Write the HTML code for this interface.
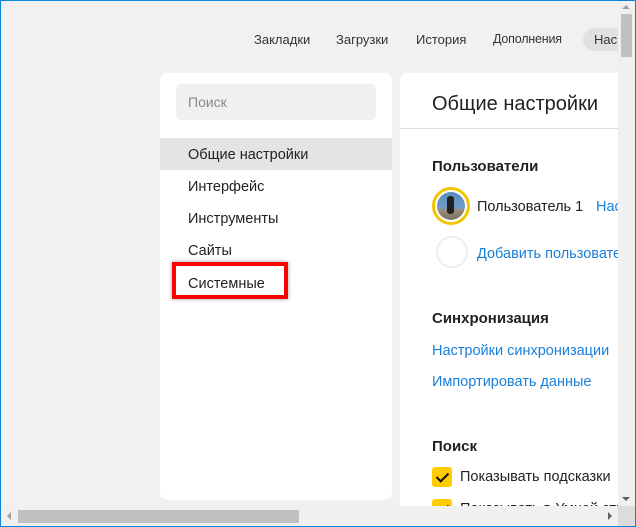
<!DOCTYPE html>
<html><head><meta charset="utf-8"><style>
*{margin:0;padding:0;box-sizing:border-box}
html,body{width:636px;height:527px;overflow:hidden}
body{background:#f2f1ef;font-family:"Liberation Sans","DejaVu Sans",sans-serif;font-size:14px;color:#222;position:relative}
.frame{position:absolute;left:0;top:0;width:636px;height:527px;border:1px solid #0a84d6;pointer-events:none;z-index:10}
.nav{position:absolute;top:32px;font-size:13px;color:#333;white-space:nowrap}
.pill{position:absolute;left:583px;top:28px;width:60px;height:23px;background:#e2e1df;border-radius:12px;font-size:13px;padding:4px 0 0 11px;color:#333}
.lp{position:absolute;left:160px;top:73px;width:232px;height:427px;background:#fff;border-radius:8px}
.search{position:absolute;left:16px;top:11px;width:200px;height:36px;background:#f0f0ef;border-radius:5px;color:#8a8a8a;padding:10px 0 0 12px;font-size:14px}
.item{position:absolute;left:0;width:232px;height:32px;padding:9px 0 0 28px;font-size:14.5px}
.rp{position:absolute;left:400px;top:73px;width:218px;height:433px;background:#fff;border-radius:8px 0 0 0;overflow:hidden}
.h1{position:absolute;left:32px;top:20px;font-size:20px;color:#222;white-space:nowrap}
.div{position:absolute;left:0;top:55px;width:240px;height:1px;background:#ddd}
.h2{position:absolute;left:32px;font-weight:bold;font-size:15px;color:#222}
.t{position:absolute;white-space:nowrap;font-size:14.5px}
.a{color:#1a7fd9}
.cb{position:absolute;left:32px;width:20px;height:20px;background:#fc0;border-radius:3px}
.cb:after{content:"";position:absolute;left:7px;top:3px;width:5px;height:10px;border:solid #111;border-width:0 2px 2px 0;transform:rotate(45deg)}
.vs{position:absolute;left:618px;top:0;width:17px;height:506px;background:#f0f0f0}
.hs{position:absolute;left:0;top:506px;width:636px;height:21px;background:#f0f0f0}
</style></head><body>
<div class="nav" style="left:254px">Закладки</div>
<div class="nav" style="left:336px">Загрузки</div>
<div class="nav" style="left:416px">История</div>
<div class="nav" style="left:493px;font-size:12.5px;letter-spacing:-0.2px">Дополнения</div>
<div class="pill">Нас</div>
<div class="lp">
<div class="search">Поиск</div>
<div class="item" style="top:65px;background:#e4e4e4">Общие настройки</div>
<div class="item" style="top:97px">Интерфейс</div>
<div class="item" style="top:129px">Инструменты</div>
<div class="item" style="top:161px">Сайты</div>
<div class="item" style="top:194px">Системные</div>
</div>
<div style="position:absolute;left:172px;top:262px;width:116px;height:37px;border:4px solid #f00;box-shadow:0 0 4px rgba(0,0,0,.4)"></div>
<div class="rp">
<div class="h1">Общие настройки</div>
<div class="div"></div>
<div class="h2" style="top:85px">Пользователи</div>
<div style="position:absolute;left:32px;top:114px;width:38px;height:38px;border-radius:50%;border:3px solid #f5c400;background:#fff;padding:2px"><div style="width:28px;height:28px;border-radius:50%;background:linear-gradient(#5b8bbd 0,#6d9cc8 55%,#9a8d7e 65%,#7b6f63 100%);position:relative"><div style="position:absolute;left:10px;top:4px;width:7px;height:18px;background:#222;border-radius:3px"></div></div></div>
<div class="t" style="left:77px;top:126px">Пользователь 1</div>
<div class="t a" style="left:196px;top:126px">Нас</div>
<div style="position:absolute;left:36px;top:163px;width:32px;height:32px;border-radius:50%;border:2px solid #eee"></div>
<div class="t a" style="left:77px;top:173px">Добавить пользователя</div>
<div class="h2" style="top:237px">Синхронизация</div>
<div class="t a" style="left:32px;top:270px">Настройки синхронизации</div>
<div class="t a" style="left:32px;top:301px">Импортировать данные</div>
<div class="h2" style="top:365px">Поиск</div>
<div class="cb" style="top:394px"></div>
<div class="t" style="left:60px;top:396px">Показывать подсказки</div>
<div class="cb" style="top:426px"></div>
<div class="t" style="left:60px;top:428px">Показывать в Умной строке</div>
</div>
<div class="vs"><div style="position:absolute;left:3px;top:14px;width:11px;height:43px;background:#c1c1c1"></div>
<div style="position:absolute;left:4px;top:5px;border:4px solid transparent;border-bottom-color:#a0a0a0;border-top:0"></div>
<div style="position:absolute;left:4px;top:497px;border:4px solid transparent;border-top-color:#606060;border-bottom:0"></div></div>
<div class="hs"><div style="position:absolute;left:18px;top:4px;width:281px;height:13px;background:#c1c1c1"></div>
<div style="position:absolute;left:7px;top:6px;border:4px solid transparent;border-right-color:#a0a0a0;border-left:0"></div>
<div style="position:absolute;left:608px;top:6px;border:4px solid transparent;border-left-color:#606060;border-right:0"></div>
<div style="position:absolute;left:618px;top:0;width:17px;height:21px;background:#dcdcdc"></div></div>
<div class="frame"></div>
</body></html>
